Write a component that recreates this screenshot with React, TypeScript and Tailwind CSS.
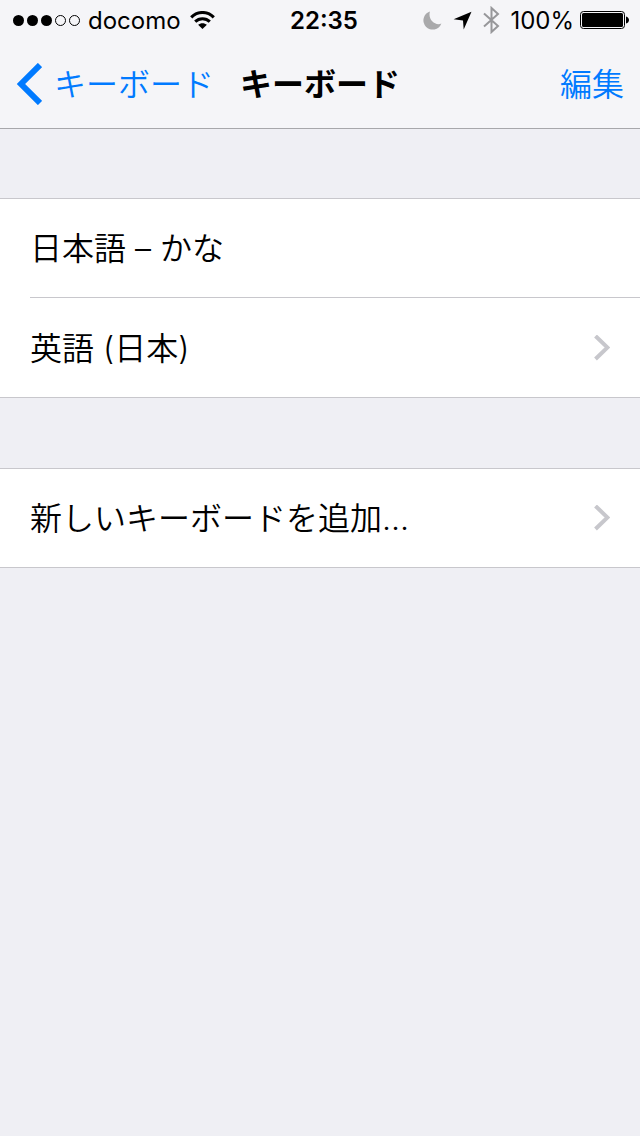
type Row = { label: string; href?: string };

const GROUPS: Row[][] = [
  [{ label: '日本語 – かな' }, { label: '英語 (日本)', href: '#english' }],
  [{ label: '新しいキーボードを追加...', href: '#add' }],
];

const SIGNAL = [true, true, true, false, false];

function StatusBar() {
  return (
    <div className="grid h-10 grid-cols-[1fr_auto_1fr] items-center pl-[13px] pr-[11px] text-[24px] leading-[36px]">
      <div className="flex items-center">
        <div className="flex gap-[3px]">
          {SIGNAL.map((on, i) => (
            <span key={i} className={on ? 'size-[11px] rounded-full bg-black' : 'size-[11px] rounded-full border border-black'} />
          ))}
        </div>
        <span className="ml-[8px] pt-[2px]">docomo</span>
        <svg className="ml-[9px] h-[18px] w-[25px]" viewBox="0 0 25 18" aria-hidden="true">
          <path d="M1.200 6.400C7.500-.2 17.500-.2 23.800 6.400M5.200 10.600c4-3.900 10.600-3.900 14.600 0" fill="none" stroke="#000" strokeWidth="3" />
          <path d="M12.500 18l-4.400-4.200c2.400-2.100 6.400-2.100 8.800 0z" />
        </svg>
      </div>
      <span className="pl-[6px] pt-[2px] font-semibold">22:35</span>
      <div className="flex items-center justify-end">
        <svg className="mr-[11px] size-[19px]" viewBox="0 0 19 19" fill="#a9a9ab" aria-hidden="true">
          <path d="M7 .4A9.300 9.300 0 1 0 18.400 12.600C12 15.200 4.500 8.500 7 .4z" />
        </svg>
        <svg className="mr-[11px] size-[19px]" viewBox="0 0 19 19" aria-hidden="true">
          <path d="M18.500 .8L10.700 18.500 10 9.500.6 8.300z" />
        </svg>
        <svg className="mr-[10px] h-[28px] w-[17px]" viewBox="0 0 17 28" fill="none" stroke="#97979a" strokeWidth="2" aria-hidden="true">
          <path d="M1 7.500l14 12.500-6.500 6V2L15 8 1 20.500" />
        </svg>
        <span className="pt-[2px]">100%</span>
        <svg className="ml-[6px] h-[20px] w-[49px]" viewBox="0 0 49 20" aria-hidden="true">
          <rect x=".5" y="1.500" width="44" height="17" rx="3" fill="none" stroke="#000" />
          <rect x="2" y="3" width="41" height="14" rx="1.500" />
          <path d="M46 6.500c4 1 4 6 0 7z" />
        </svg>
      </div>
    </div>
  );
}

function NavBar() {
  return (
    <nav className="grid h-[88px] grid-cols-[1fr_auto_1fr] items-center px-4 text-[32px] leading-[48px]">
      <a href="#back" className="flex items-center font-[350] text-[#007aff]">
        <svg className="mr-[12px] h-[42px] w-[26px]" viewBox="0 0 26 42" fill="none" stroke="currentColor" strokeWidth="6" aria-hidden="true">
          <path d="M24 2L5 21 24 40" />
        </svg>
        <span className="pt-[2px]">キーボード</span>
      </a>
      <h1 className="pt-[2px] font-semibold">キーボード</h1>
      <button type="button" className="justify-self-end pt-[2px] font-[350] text-[#007aff]">編集</button>
    </nav>
  );
}

function RowContent({ label, href }: Row) {
  if (!href) return <span className="pt-[2px]">{label}</span>;
  return (
    <a href={href} className="flex flex-1 items-center justify-between">
      <span className="pt-[2px]">{label}</span>
      <svg className="h-[26px] w-[16px]" viewBox="0 0 16 26" fill="none" stroke="#c7c7cc" strokeWidth="4" aria-hidden="true">
        <path d="M1.500 1L13.500 12.500 1.500 24" />
      </svg>
    </a>
  );
}

export default function App() {
  return (
    <div className="min-h-screen bg-[#efeff4] font-['Inter','Noto_Sans_CJK_JP',sans-serif] text-black" lang="ja">
      <header className="border-b border-[#a7a7ab] bg-[#f5f5f8]">
        <StatusBar />
        <NavBar />
      </header>
      <main className="flex flex-col gap-[70px] pt-[69px] text-[32px] leading-[48px] font-[350]">
        {GROUPS.map((rows, i) => (
          <ul key={i} className="bg-white">
            {rows.map((row) => (
              <li key={row.label} className="group h-[100px] border-[#c8c7cc] pl-[30px] first:border-t last:border-b">
                <div className="flex h-full items-center border-b border-[#c8c7cc] pr-[30px] group-last:border-b-0">
                  <RowContent {...row} />
                </div>
              </li>
            ))}
          </ul>
        ))}
      </main>
    </div>
  );
}
